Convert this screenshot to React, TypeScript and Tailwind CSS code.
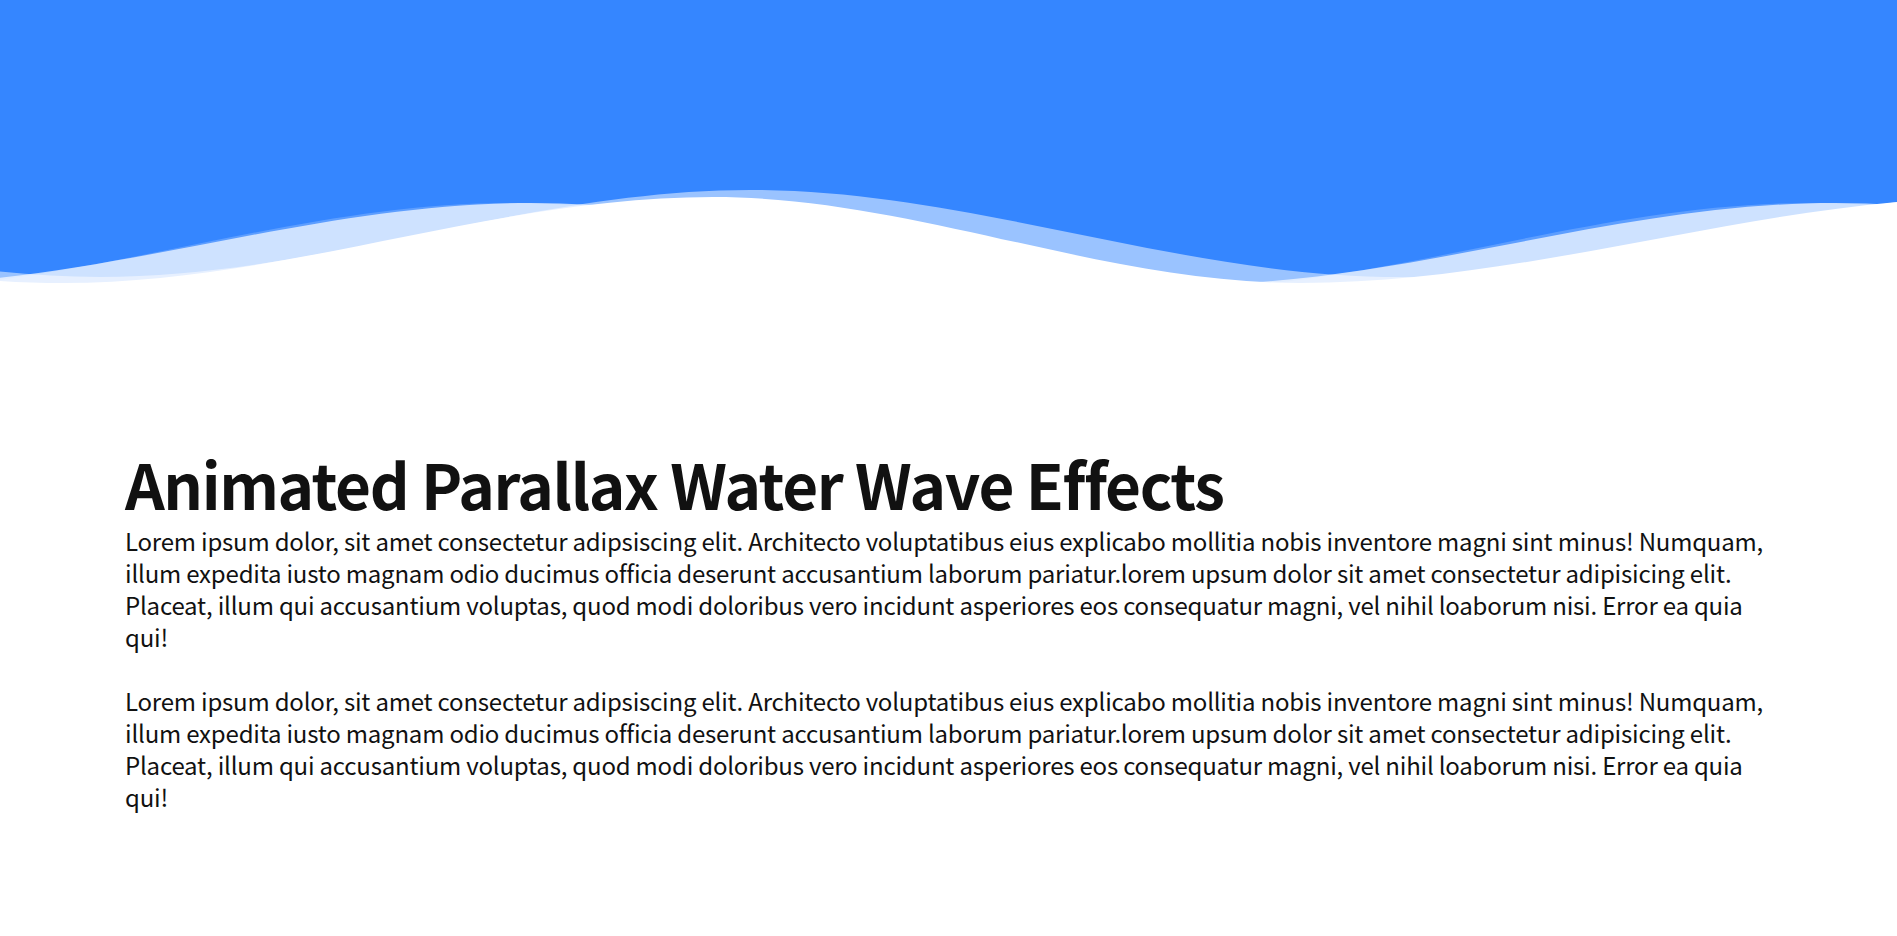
import React from "react";

const W = 1897;
const TOP = 170;
const BOTTOM = 300;

type Pt = [number, number];

// wave surface through alternating crest / trough points, gentle cubic between them
function wavePath(pts: Pt[]) {
  let d = `M${pts[0][0]} ${pts[0][1]}`;
  for (let i = 1; i < pts.length; i++) {
    const [x0, y0] = pts[i - 1];
    const [x1, y1] = pts[i];
    const h = x1 - x0;
    d += ` C${x0 + 0.341 * h} ${y0} ${x0 + 0.659 * h} ${y1} ${x1} ${y1}`;
  }
  const last = pts[pts.length - 1][0];
  d += ` L${last} ${BOTTOM} L${pts[0][0]} ${BOTTOM} Z`;
  return d;
}

// drawn bottom to top
const layers: { pts: Pt[]; fill: string }[] = [
  {
    pts: [[-550, 190], [100, 277], [750, 190], [1400, 277], [2050, 190]],
    fill: "rgba(255,255,255,0.5)",
  },
  {
    pts: [[-770, 203], [-120, 285], [530, 203], [1185, 285], [1835, 203], [2485, 285]],
    fill: "rgba(255,255,255,0.7)",
  },
  {
    pts: [[-600, 197], [63, 283], [713, 197], [1300, 283], [2000, 197]],
    fill: "#ffffff",
  },
  {
    pts: [[-790, 203], [-140, 290], [510, 203], [1160, 290], [1810, 203], [2460, 290]],
    fill: "rgba(255,255,255,0.2)",
  },
];

function Waves() {
  return (
    <svg
      className="block w-full h-[130px]"
      viewBox={`0 ${TOP} ${W} ${BOTTOM - TOP}`}
      preserveAspectRatio="none"
    >
      {layers.map((l, i) => (
        <path key={i} d={wavePath(l.pts)} fill={l.fill} />
      ))}
    </svg>
  );
}

const lines = [
  "Lorem ipsum dolor, sit amet consectetur adipsiscing elit. Architecto voluptatibus eius explicabo mollitia nobis inventore magni sint minus! Numquam,",
  "illum expedita iusto magnam odio ducimus officia deserunt accusantium laborum pariatur.lorem upsum dolor sit amet consectetur adipisicing elit.",
  "Placeat, illum qui accusantium voluptas, quod modi doloribus vero incidunt asperiores eos consequatur magni, vel nihil loaborum nisi. Error ea quia",
  "qui!",
];

function Paragraph({ className = "" }: { className?: string }) {
  return (
    <p className={`text-[24px] leading-[32px] tracking-[-0.2px] text-[#111] ${className}`}>
      {lines.map((l, i) => (
        <span key={i} className="block whitespace-nowrap">
          {l}
        </span>
      ))}
    </p>
  );
}

export default function App() {
  return (
    <div className="min-h-screen bg-white font-['Noto_Sans_CJK_KR','Noto_Sans',sans-serif]">
      <header className="h-[300px] bg-[#3586ff] flex flex-col justify-end">
        <Waves />
      </header>

      <section className="px-[125px] pt-[138px] pb-16">
        <h1 className="text-[62px] leading-[90px] font-bold tracking-[-1.4px] text-[#111]">
          Animated Parallax Water Wave Effects
        </h1>
        <Paragraph className="-mt-[3px]" />
        <Paragraph className="mt-8" />
      </section>
    </div>
  );
}
